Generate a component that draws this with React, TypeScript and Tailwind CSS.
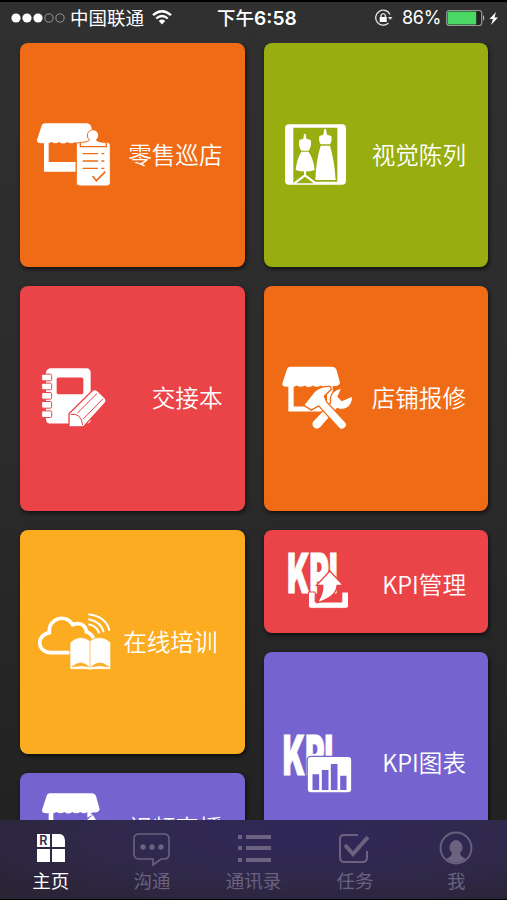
import type { ReactNode } from "react";

function Icon({ box, children }: { box: string; children: ReactNode }) {
  return (
    <svg viewBox={box} className="h-[90px] w-[90px] shrink-0" fill="#fff">
      {children}
    </svg>
  );
}

const awning =
  "M60 40H186Q195 40 198 48L209 88Q207 99 190 97Q182 103 171 97Q161 103 151 96Q138 104 127 96Q115 105 103 96Q91 104 80 96Q69 102 57 99Q35 102 36 90L49 50Q52 40 60 40Z";

function Retail() {
  return (
    <Icon box="0 0 270 270">
      <path d={awning} />
      <path d="M57 98H71V156H152V185H57Z" />
      <path
        d="M163 97H172Q190 96 194 90A17 17 0 1 1 214 90Q218 96 236 97H247Q256 97 256 106V218Q256 228 246 228H165Q154 228 154 218V106Q154 97 163 97Z"
        stroke="#f06b16"
        strokeWidth="3"
      />
      <path
        d="M166 98V110H244V98M173 131H219M173 153H219M173 175H219M229 131H238M229 153H238M229 175H238"
        fill="none"
        stroke="#f06b16"
        strokeWidth="4"
      />
      <path d="M203 198L214 212L241 185" fill="none" stroke="#f06b16" strokeWidth="5" />
    </Icon>
  );
}

function Display() {
  return (
    <Icon box="0 0 270 270">
      <rect x="45" y="43" width="183" height="181" rx="12" />
      <path d="M70 53H202V220H70Z" fill="#97ad10" />
      <path d="M102 72H107L109 86L122 90Q126 108 116 122H94Q84 108 88 90L100 86ZM94 125H116Q131 148 134 180Q105 189 77 180Q80 148 94 125Z" />
      <path d="M163 57H168L171 74L184 78Q187 93 180 103H152Q145 93 148 78L160 74ZM152 107H180Q193 150 197 210H136Q138 150 152 107Z" />
      <path d="M105 182V198M72 221L105 196L134 218H204" fill="none" stroke="#fff" strokeWidth="6" />
    </Icon>
  );
}

function Notebook() {
  return (
    <Icon box="0 -4.5 270 270">
      <path d="M76 41H184Q197 41 197 55V196Q197 207 184 207H74Q64 207 63 195V54Q64 43 76 41Z" />
      <rect x="95" y="69" width="80" height="50" rx="5" fill="#ea4348" />
      {[59, 86, 114, 141, 169].map((y) => (
        <rect key={y} x="50" y={y} width="30" height="20" rx="4" stroke="#ea4348" strokeWidth="3" />
      ))}
      <path d="M203 107Q211 102 218 109L241 131Q246 138 240 146L175 217H132V178Z" stroke="#ea4348" strokeWidth="4" />
      <path d="M137 180Q168 174 173 212M157 176L216 117M174 194L234 133" fill="none" stroke="#ea4348" strokeWidth="3" />
    </Icon>
  );
}

function Repair() {
  return (
    <Icon box="0 -4.5 270 270">
      <g transform="translate(1 -3)">
        <path d={awning} />
      </g>
      <path d="M55 92H71V156H171V92H188V171H55Z" />
      <g stroke="#f06b16" strokeWidth="4" strokeLinejoin="round">
        <path d="M216 101L204 126L216 138L248 124Q249 151 231 161Q218 168 202 162L151 220Q141 229 130 220Q121 209 129 199L182 145Q178 127 190 112Q201 102 216 101Z" />
        <path d="M101 152L133 111Q153 94 181 96L184 104L163 125L170 142L228 204Q234 215 223 222Q211 229 204 218L146 154L124 167Z" />
      </g>
    </Icon>
  );
}

function Training() {
  return (
    <Icon box="0 -10 270 270">
      <path
        d="M134 157H81C37 159 30 106 73 97C68 55 121 37 143 73C169 63 183 78 184 94Q198 98 206 114"
        fill="none"
        stroke="#fff"
        strokeWidth="11"
      />
      <path d="M190 42Q244 49 253 91M190 57Q228 63 236 96M190 72Q215 76 223 99" fill="none" stroke="#fff" strokeWidth="6" />
      <path d="M135 127Q164 99 195 121Q227 100 257 126V207H205Q195 211 186 207H135Z" stroke="#fcac20" strokeWidth="2" />
      <path d="M141 200Q168 176 191 199Q164 193 141 200ZM199 199Q225 176 251 200Q225 193 199 199Z" fill="#fcac20" stroke="#fcac20" strokeWidth="2" />
      <path d="M195 121V203" stroke="#fcac20" strokeWidth="2" />
    </Icon>
  );
}

function KpiWord({ x, y }: { x: number; y: number }) {
  return (
    <text
      x={x}
      y={y}
      textLength="151"
      lengthAdjust="spacingAndGlyphs"
      className="font-['Inter','Liberation_Sans',sans-serif] text-[165px] font-black"
      stroke="#fff"
      strokeWidth="3"
    >
      KPI
    </text>
  );
}

function KpiManage() {
  return (
    <Icon box="10.5 33 270 270">
      <KpiWord x={80} y={204} />
      <path d="M144 201H164V231H244V201H264V243Q264 250 256 250H152Q144 250 144 243Z" stroke="#ea4348" strokeWidth="3" />
      <path d="M208 138L248 181H230Q227 218 170 233Q188 207 187 181H168Z" stroke="#ea4348" strokeWidth="4" />
    </Icon>
  );
}

function KpiChart() {
  return (
    <Icon box="10.5 -4 270 270">
      <KpiWord x={67} y={165} />
      <rect x="140" y="108" width="134" height="110" rx="12" stroke="#7564d0" strokeWidth="4" />
      <path d="M156 162H176V209H156ZM184 149H204V209H184ZM211 131H231V209H211ZM239 166H258V209H239Z" fill="#7564d0" />
    </Icon>
  );
}

function Video() {
  return (
    <Icon box="0 0 270 270">
      <path d={awning} transform="translate(30 3)" />
      <path d="M86 100H100V178H178V192H86ZM202 97L218 107L202 116Z" />
      <path d="M200 124L219 108L232 130V160H196Z" />
    </Icon>
  );
}

type TileProps = { label: string; color: string; size: string; inset: string; text: string; children: ReactNode };

function Tile({ label, color, size, inset, text, children }: TileProps) {
  return (
    <section className={`flex shrink-0 items-center overflow-hidden rounded-[8px] shadow-[1px_2px_4px_rgba(0,0,0,0.65)] ${color} ${size} ${inset}`}>
      {children}
      <span className={`ml-auto whitespace-nowrap text-[23.6px] leading-[30px] font-[350] ${text}`}>{label}</span>
    </section>
  );
}

function StatusBar() {
  return (
    <header className="flex h-[43px] shrink-0 items-start border-t-2 border-black pt-[5px] text-[18.5px] leading-[22px]">
      <div className="flex h-[22px] w-[217px] items-center pl-[11px]">
        <svg className="h-[12px] w-[55px]" viewBox="0 0 55 12" fill="#fff">
          <circle cx="5" cy="6" r="4.6" />
          <circle cx="16" cy="6" r="4.6" />
          <circle cx="27" cy="6" r="4.6" />
          <circle cx="38" cy="6" r="4.1" fill="none" stroke="#aaa" strokeWidth=".8" />
          <circle cx="49" cy="6" r="4.1" fill="none" stroke="#aaa" strokeWidth=".8" />
        </svg>
        <span className="ml-[4px] -mt-[2px] whitespace-nowrap">中国联通</span>
        <svg className="ml-[8px] -mt-[2px] h-[15px] w-[20px]" viewBox="0 0 20 15" fill="none" stroke="#fff" strokeWidth="2.3">
          <path d="M1 5.2Q10-2.7 19 5.2M4.2 8.5Q10 3.5 15.8 8.5" />
          <path d="M6.8 11Q10 8.2 13.2 11L10 14.5Z" fill="#fff" stroke="none" />
        </svg>
      </div>
      <div className="-mt-px w-[154px] whitespace-nowrap font-medium">
        下午<span className="font-['Inter',sans-serif] text-[19.2px] font-semibold">6:58</span>
      </div>
      <div className="flex h-[22px] items-center">
        <svg className="ml-[3px] h-[18px] w-[19px]" viewBox="0 0 19 18" fill="none" stroke="#ddd" strokeWidth="1.4">
          <path d="M16 5.5A7.5 7.5 0 1 0 14.5 14" />
          <path d="M13.8 8H18.5L16.2 11Z" fill="#ddd" stroke="none" />
          <rect x="5.7" y="8" width="7" height="5" fill="#fff" stroke="none" />
          <path d="M7 8V6.4Q9.2 2.8 11.4 6.4V8" />
        </svg>
        <span className="ml-[9px] w-[41px] whitespace-nowrap font-['Inter',sans-serif] text-[18px] tracking-[-0.3px]">86%</span>
        <svg className="ml-[3px] h-[18px] w-[54px]" viewBox="0 0 54 18">
          <rect x=".7" y="1.5" width="35" height="15" rx="2.5" fill="#222" stroke="#999" strokeWidth="1.2" />
          <rect x="1.7" y="2.5" width="28.5" height="13" rx="1" fill="#4bd763" />
          <path d="M37 6Q39.5 9 37 12Z" fill="#bbb" />
          <path d="M50 3L43.5 10H47L45 16L52 8.5H48.5Z" fill="#fff" />
        </svg>
      </div>
    </header>
  );
}

function Tab({ label, active = false, children }: { label: string; active?: boolean; children: ReactNode }) {
  return (
    <button className={`flex flex-1 flex-col items-center pt-[9px] ${active ? "text-white" : "text-[#6a627f]"}`}>
      <svg viewBox="0 0 40 40" className="h-[40px] w-[40px]" fill="none" stroke="currentColor" strokeWidth="2">
        {children}
      </svg>
      <span className="-mt-px whitespace-nowrap text-[18.5px] leading-[24px]">{label}</span>
    </button>
  );
}

export default function App() {
  return (
    <div className="flex h-[900px] w-[507px] flex-col overflow-hidden bg-linear-to-b from-[#303030] via-[#2b2b2b] to-[#202020] font-['Noto_Sans_CJK_SC',sans-serif] text-white">
      <StatusBar />
      <main className="flex h-[777px] shrink-0 gap-[19px] overflow-hidden pl-[20px]">
        <div className="flex flex-col gap-[19px]">
          <Tile label="零售巡店" color="bg-[#f06b16]" size="h-[224.3px] w-[224.5px]" inset="pl-[5px]" text="mr-[22px] -mt-[2px]"><Retail /></Tile>
          <Tile label="交接本" color="bg-[#ea4348]" size="h-[224.3px] w-[224.5px]" inset="pl-[5px]" text="mr-[22px] -mt-[2px]"><Notebook /></Tile>
          <Tile label="在线培训" color="bg-[#fcac20]" size="h-[224.3px] w-[224.5px]" inset="pl-[5px]" text="mr-[27px] -mt-[2px]"><Training /></Tile>
          <Tile label="视频直播" color="bg-[#7564d0]" size="h-[103px] w-[224.5px]" inset="pl-0" text="mr-[22px] mt-[6px]"><Video /></Tile>
        </div>
        <div className="flex flex-col gap-[19px]">
          <Tile label="视觉陈列" color="bg-[#97ad10]" size="h-[224.3px] w-[224.5px]" inset="pl-[6.5px]" text="mr-[22px] -mt-[2px]"><Display /></Tile>
          <Tile label="店铺报修" color="bg-[#f06b16]" size="h-[224.3px] w-[224.5px]" inset="pl-[6.5px]" text="mr-[22px] -mt-[2px]"><Repair /></Tile>
          <Tile label="KPI管理" color="bg-[#ea4348]" size="h-[103px] w-[224.5px]" inset="pl-0" text="mr-[22px] mt-[6px]"><KpiManage /></Tile>
          <Tile label="KPI图表" color="bg-[#7564d0]" size="h-[224.3px] w-[224.5px]" inset="pl-0" text="mr-[22px] -mt-[3px]"><KpiChart /></Tile>
        </div>
      </main>
      <nav className="flex h-[80px] shrink-0 border-b border-black bg-[radial-gradient(ellipse_at_60%_20%,#30275a_0%,#30294c_45%,#292332_100%)]">
        <Tab label="主页" active>
          <g fill="currentColor" stroke="none">
            <path d="M6 5H19V18H6ZM21 5H29Q34 6 34 12V18H21ZM6 20H19V33H6ZM21 20H34V33H21Z" />
            <text x="8.2" y="16" fill="#30294c" className="font-['Inter',sans-serif] text-[12.5px] font-semibold">R</text>
          </g>
        </Tab>
        <Tab label="沟通">
          <path d="M7 5H32Q37 5 37 10V25Q37 30 32 30H29L21 36V30H7Q2 30 2 25V10Q2 5 7 5Z" strokeWidth="1.6" />
          <g fill="currentColor" stroke="none">
            <circle cx="11" cy="18" r="2.7" />
            <circle cx="20" cy="18" r="2.7" />
            <circle cx="29" cy="18" r="2.7" />
          </g>
        </Tab>
        <Tab label="通讯录">
          <path d="M4 8H8M12 8H37M4 19H8M12 19H37M4 31H8M12 31H37" strokeWidth="4" />
        </Tab>
        <Tab label="任务">
          <path d="M23 6H9Q5 6 5 10V28Q5 33 9 33H28Q32 33 32 28V22" />
          <path d="M10 16L18 25L33 8" strokeWidth="4" />
        </Tab>
        <Tab label="我">
          <circle cx="20" cy="19" r="15.5" strokeWidth="1.8" />
          <path d="M20 11A7.5 7.5 0 0 1 24 24Q24 27 30 30Q20 37 10 30Q16 27 16 24A7.5 7.5 0 0 1 20 11Z" fill="currentColor" stroke="none" />
        </Tab>
      </nav>
    </div>
  );
}
